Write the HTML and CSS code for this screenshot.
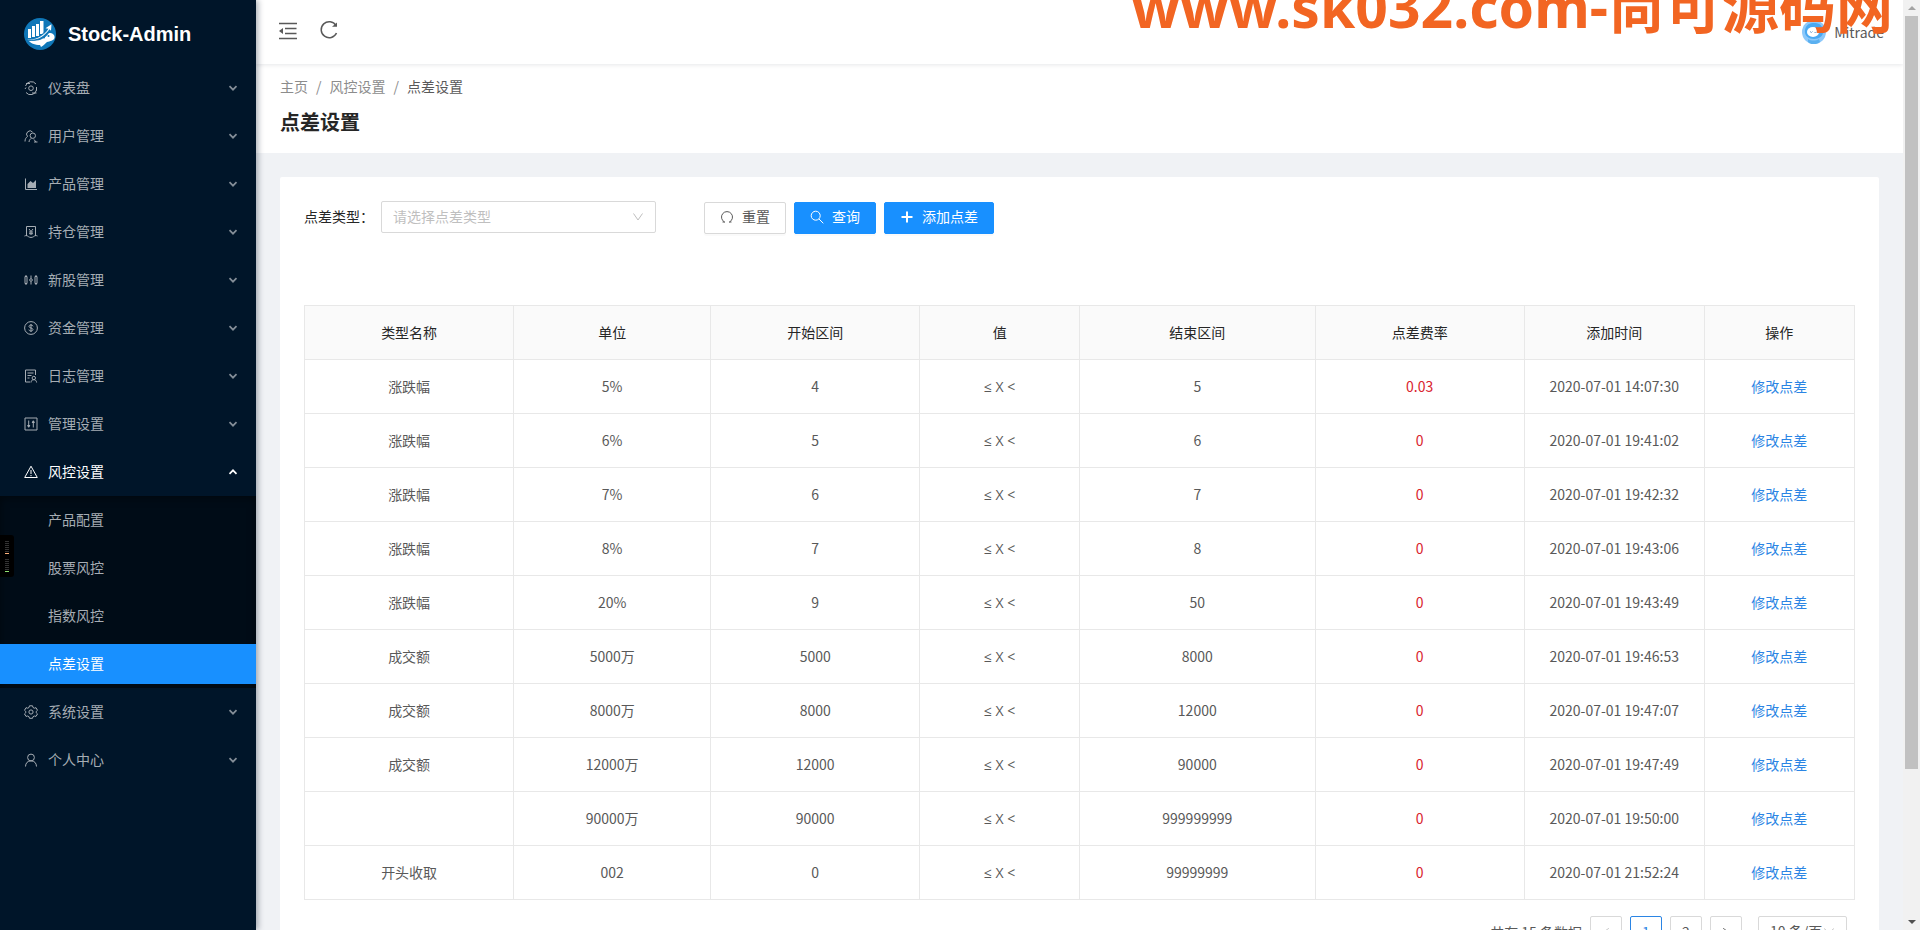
FILE: index.html
```
<!DOCTYPE html>
<html lang="zh-CN">
<head>
<meta charset="utf-8">
<title>点差设置 - Stock-Admin</title>
<link rel="stylesheet" href="styles.css">
</head>
<body>
<svg class="sprite" aria-hidden="true">
  <symbol id="down" viewBox="0 0 10 10"><path d="M1.500 3.200 5 6.700 8.500 3.200" fill="none" stroke="currentColor" stroke-width="1.700"/></symbol>
  <symbol id="chevron" viewBox="0 0 12 12"><path d="M1.500 2.500 6 9 10.500 2.500" fill="none" stroke="currentColor"/></symbol>
</svg>
<div class="app">
  <aside class="sider">
    <div class="logo">
      <svg class="logo-mark" viewBox="0 0 32 32">
        <circle cx="16" cy="16" r="16" fill="#0f77b8"/>
        <path d="M4 11h3v9H4zM8 8h3v11H8zM12 6h3v12h-3zM16 3h3.500v13H16z" fill="#fff"/>
        <path d="M4 22c9 2 16 0 21-7 4 0 6 2 5.500 5-1 3-4.500 3-7.500 4-2 2-3 3-6 5l-1-2c-5 0-10-2-12-5z" fill="#fff"/>
        <path d="M3 20.500c9 1 16-3 21-10.500M4 22.300c9 .7 17-3 21.500-10" fill="none" stroke="#0f77b8"/>
        <path d="M3 21.300c9 1 16.500-3 21.500-10.500l-3-.5 6-4-.5 6.500-1.500-1.500C20 19 12 23.500 3 21.300z" fill="#fff"/>
        <circle cx="20" cy="19.500" r="1" fill="#0f77b8"/><circle cx="24.500" cy="18" r="1" fill="#0f77b8"/>
      </svg>
      <span>Stock-Admin</span>
    </div>
    <nav>
      <ul class="menu">
        <li><a class="item" href="#"><svg class="icon" viewBox="0 0 14 14"><path d="M1.500 5A6 6 0 0 1 12 3M12.500 9A6 6 0 0 1 2 11.500M2 2.500h4M8 12h4.500M12.500 6v3.500M1 8l1-1.500"/><circle cx="7" cy="7.200" r="2.300"/></svg><span>仪表盘</span><svg class="arrow"><use href="#down"/></svg></a></li>
        <li><a class="item" href="#"><svg class="icon" viewBox="0 0 14 14"><path d="M3.500 7.500A3.300 3.300 0 1 1 8.500 3M1 12.500c0-2.500 1-4 2.500-5M5 13c.2-2 1.200-3 2.500-3.800M10 10.500l2 2.500M10 13h3.500"/><circle cx="8.800" cy="6.700" r="2.700"/></svg><span>用户管理</span><svg class="arrow"><use href="#down"/></svg></a></li>
        <li><a class="item" href="#"><svg class="icon" viewBox="0 0 14 14"><path d="M1.500 1.500v11H13"/><path class="solid" d="M3.500 11V7l3-3 2.500 2 3-3v8z"/></svg><span>产品管理</span><svg class="arrow"><use href="#down"/></svg></a></li>
        <li><a class="item" href="#"><svg class="icon" viewBox="0 0 14 14"><path d="M2.500 11V1.500h9V11M.5 11c1.500-.8 3-.3 4 .7 1.500 1 3.500 1 5 0 1-1 2.500-1.500 4-.7M5 4l2 2.500L9 4M7 6.500V10M5 7h4M5 8.700h4"/></svg><span>持仓管理</span><svg class="arrow"><use href="#down"/></svg></a></li>
        <li><a class="item" href="#"><svg class="icon" viewBox="0 0 14 14"><path d="M1 3.500h2v7H1zM2 2v1.500M2 10.500V12M11 3.500h2v7h-2zM12 2v1.500M12 10.500V12M7 2.500v3M7 8.500v3"/><circle cx="7" cy="7" r="1.300"/></svg><span>新股管理</span><svg class="arrow"><use href="#down"/></svg></a></li>
        <li><a class="item" href="#"><svg class="icon" viewBox="0 0 14 14"><circle cx="7" cy="7" r="6.400"/><path d="M9 5.300C8.800 4.400 8 4 7 4c-1.100 0-2 .5-2 1.400 0 2 4 1.200 4 3.200C9 9.500 8.100 10 7 10c-1.200 0-2-.5-2.100-1.400M7 3v8"/></svg><span>资金管理</span><svg class="arrow"><use href="#down"/></svg></a></li>
        <li><a class="item" href="#"><svg class="icon" viewBox="0 0 14 14"><path d="M6 13H1.500V1h10v5M3.500 4h6M3.500 6.500h4M3.500 9h2M7 13.500c.2-2 1.200-2.800 2.800-2.800s2.600.8 2.800 2.800"/><circle cx="9.800" cy="9" r="1.700"/></svg><span>日志管理</span><svg class="arrow"><use href="#down"/></svg></a></li>
        <li><a class="item" href="#"><svg class="icon" viewBox="0 0 14 14"><path d="M1 1h12v12H1zM4.700 3.500v7M9.300 3.500v7M3.300 8.500h2.800M7.900 5.500h2.800M3.700 9.500h2M8.300 4.500h2"/></svg><span>管理设置</span><svg class="arrow"><use href="#down"/></svg></a></li>
        <li><a class="item open" href="#"><svg class="icon" viewBox="0 0 14 14"><path d="M7 1.200 13.300 12.500H.7zM7 5v4M7 10v1.200"/></svg><span>风控设置</span><svg class="arrow"><use href="#down"/></svg></a>
          <ul class="submenu">
            <li><a class="item" href="#"><span>产品配置</span></a></li>
            <li><a class="item" href="#"><span>股票风控</span></a></li>
            <li><a class="item" href="#"><span>指数风控</span></a></li>
            <li><a class="item selected" href="#" aria-current="page"><span>点差设置</span></a></li>
          </ul>
        </li>
        <li><a class="item" href="#"><svg class="icon" viewBox="0 0 14 14"><path d="M5.500.8h3l.5 1.700 1.300.7 1.700-.5 1.500 2.600-1.300 1.200v1.200l1.300 1.200-1.500 2.500-1.700-.4-1.300.7-.5 1.600h-3L5 11.700 3.700 11l-1.700.4L.5 8.900l1.300-1.200V6.500L.5 5.300 2 2.700l1.700.5L5 2.500z"/><circle cx="7" cy="7" r="2.100"/></svg><span>系统设置</span><svg class="arrow"><use href="#down"/></svg></a></li>
        <li><a class="item" href="#"><svg class="icon" viewBox="0 0 14 14"><circle cx="7" cy="4.500" r="3.400"/><path d="M1.500 13.500c.2-3.500 2-5.600 5.500-5.600s5.300 2.100 5.500 5.600"/></svg><span>个人中心</span><svg class="arrow"><use href="#down"/></svg></a></li>
      </ul>
    </nav>
    <div class="meter"><i></i><i></i></div>
  </aside>

  <div class="main">
    <header class="topbar">
      <button class="tool" type="button" aria-label="收起菜单"><svg width="20" height="20" viewBox="0 0 20 20"><path d="M1 2.500h18M7 7.500h11.500M7 12.500h11.500M1 17.500h18" fill="none" stroke="currentColor" stroke-width="1.500"/><path d="M1 10l4-3v6z" fill="currentColor"/></svg></button>
      <button class="tool" type="button" aria-label="刷新"><svg width="20" height="20" viewBox="0 0 20 20"><path d="M17 5.500A8 8 0 1 0 17.500 13" fill="none" stroke="currentColor" stroke-width="1.500"/><path d="M18 2.500v4.300h-5z" fill="currentColor"/></svg></button>
      <div class="user">
        <svg width="24" height="24" viewBox="0 0 24 24"><circle cx="12" cy="12" r="12" fill="#8cc8fa"/><path d="M3 10C4 4 8 3 12 3s8 1 9 7-4 9-9 9-10-3-9-9z" fill="#4aa9f2"/><ellipse cx="11" cy="12" rx="6" ry="5" fill="#fff"/><path d="M8 11.500l1.500 1 1-1M12.500 12l1 1 1.500-1.500" fill="none" stroke="#6ea2cd"/><path d="M6 19c3 2 8 2 11 0l1 3c-4 3-9 3-12 0z" fill="#5ab0f0"/></svg>
        <span>Mitrade</span>
      </div>
    </header>
    <section class="page-head">
      <nav class="crumbs" aria-label="面包屑"><a href="#">主页</a><i>/</i><a href="#">风控设置</a><i>/</i><span>点差设置</span></nav>
      <h1>点差设置</h1>
    </section>
    <main class="content">
      <div class="card">
        <form class="filters">
          <label for="kind">点差类型：</label>
          <div class="pick">
            <select id="kind"><option>请选择点差类型</option></select>
            <svg><use href="#chevron"/></svg>
          </div>
          <div class="actions">
            <button class="btn" type="reset"><svg class="icon" viewBox="0 0 14 14"><path d="M4.500 12A5.500 5.500 0 1 1 9.500 12M2.500 12h2.500M9 12h2.500"/></svg>重置</button>
            <button class="btn primary" type="button"><svg class="icon" viewBox="0 0 14 14"><circle cx="5.700" cy="5.700" r="4.500"/><path d="M9 9l4.300 4.300"/></svg>查询</button>
            <button class="btn primary" type="button"><svg class="icon" viewBox="0 0 14 14"><path class="thick" d="M7 1.500v11M1.500 7h11"/></svg>添加点差</button>
          </div>
        </form>
        <table>
          <colgroup><col class="c1"><col class="c2"><col class="c1"><col class="c3"><col class="c4"><col class="c1"><col class="c5"><col></colgroup>
          <thead><tr><th>类型名称</th><th>单位</th><th>开始区间</th><th>值</th><th>结束区间</th><th>点差费率</th><th>添加时间</th><th>操作</th></tr></thead>
          <tbody>
            <tr><td>涨跌幅</td><td>5%</td><td>4</td><td class="op">≤ X &lt;</td><td>5</td><td class="rate">0.03</td><td>2020-07-01 14:07:30</td><td><a href="#">修改点差</a></td></tr>
            <tr><td>涨跌幅</td><td>6%</td><td>5</td><td class="op">≤ X &lt;</td><td>6</td><td class="rate">0</td><td>2020-07-01 19:41:02</td><td><a href="#">修改点差</a></td></tr>
            <tr><td>涨跌幅</td><td>7%</td><td>6</td><td class="op">≤ X &lt;</td><td>7</td><td class="rate">0</td><td>2020-07-01 19:42:32</td><td><a href="#">修改点差</a></td></tr>
            <tr><td>涨跌幅</td><td>8%</td><td>7</td><td class="op">≤ X &lt;</td><td>8</td><td class="rate">0</td><td>2020-07-01 19:43:06</td><td><a href="#">修改点差</a></td></tr>
            <tr><td>涨跌幅</td><td>20%</td><td>9</td><td class="op">≤ X &lt;</td><td>50</td><td class="rate">0</td><td>2020-07-01 19:43:49</td><td><a href="#">修改点差</a></td></tr>
            <tr><td>成交额</td><td>5000万</td><td>5000</td><td class="op">≤ X &lt;</td><td>8000</td><td class="rate">0</td><td>2020-07-01 19:46:53</td><td><a href="#">修改点差</a></td></tr>
            <tr><td>成交额</td><td>8000万</td><td>8000</td><td class="op">≤ X &lt;</td><td>12000</td><td class="rate">0</td><td>2020-07-01 19:47:07</td><td><a href="#">修改点差</a></td></tr>
            <tr><td>成交额</td><td>12000万</td><td>12000</td><td class="op">≤ X &lt;</td><td>90000</td><td class="rate">0</td><td>2020-07-01 19:47:49</td><td><a href="#">修改点差</a></td></tr>
            <tr><td></td><td>90000万</td><td>90000</td><td class="op">≤ X &lt;</td><td>999999999</td><td class="rate">0</td><td>2020-07-01 19:50:00</td><td><a href="#">修改点差</a></td></tr>
            <tr><td>开头收取</td><td>002</td><td>0</td><td class="op">≤ X &lt;</td><td>99999999</td><td class="rate">0</td><td>2020-07-01 21:52:24</td><td><a href="#">修改点差</a></td></tr>
          </tbody>
        </table>
        <div class="pager">
          <span>共有 15 条数据</span>
          <button class="page off" type="button" aria-label="上一页"><svg class="prev"><use href="#chevron"/></svg></button>
          <button class="page current" type="button">1</button>
          <button class="page" type="button">2</button>
          <button class="page" type="button" aria-label="下一页"><svg class="next"><use href="#chevron"/></svg></button>
          <div class="pick size"><select aria-label="每页条数"><option>10 条/页</option></select><svg><use href="#chevron"/></svg></div>
        </div>
      </div>
    </main>
    <div class="watermark">www.sk032.com-尚可源码网</div>
  </div>
  <div class="scrollbar"><b class="up"></b><span class="thumb"></span><b class="dn"></b></div>
</div>
</body>
</html>
```
FILE: styles.css
```
* { box-sizing: border-box; }
body {
  margin: 0;
  overflow: hidden;
  color: #595959;
  background: #f0f2f5;
  font: 14px/21px "Noto Sans CJK SC", "Open Sans", sans-serif;
}
a { color: inherit; text-decoration: none; }
ul { margin: 0; padding: 0; list-style: none; }
button, select { font: inherit; color: inherit; }
.sprite { display: none; }
.app { display: flex; height: 100vh; }

.sider {
  position: relative;
  z-index: 2;
  flex: none;
  width: 256px;
  background: #001529;
  box-shadow: 2px 0 6px rgba(0, 21, 41, .35);
}
.logo {
  display: flex;
  align-items: center;
  gap: 12px;
  height: 64px;
  padding: 4px 24px 0;
  color: #fff;
  font: bold 20px/32px "Liberation Sans", sans-serif;
}
.logo-mark { width: 32px; height: 32px; }
.menu { display: flow-root; color: #a6adb4; }
.item {
  display: flex;
  align-items: center;
  gap: 10px;
  height: 40px;
  margin: 4px 0 8px;
  padding: 0 18px 0 24px;
}
.item span { padding-bottom: 2px; }
.item.open { color: #fff; margin-bottom: 4px; }
.icon {
  flex: none;
  width: 14px;
  height: 14px;
  fill: none;
  stroke: currentColor;
}
.icon .solid { fill: currentColor; stroke: none; }
.icon .thick { stroke-width: 2; }
.arrow { width: 10px; height: 10px; margin-left: auto; opacity: .8; }
.open .arrow { transform: rotate(180deg); opacity: 1; }
.submenu {
  display: flow-root;
  margin-bottom: 4px;
  background: #000c17;
  box-shadow: inset 0 2px 8px rgba(0, 0, 0, .45);
}
.submenu .item { padding-left: 48px; }
.submenu li:last-child .item { margin-bottom: 4px; }
.item.selected { color: #fff; background: #1890ff; }
.meter {
  position: absolute;
  top: 535px;
  left: 0;
  display: grid;
  gap: 5px;
  width: 14px;
  padding: 6px 5px 5px;
  border-radius: 0 3px 3px 0;
  background: #000;
}
.meter i {
  height: 13px;
  width: 4px;
  border-bottom: 1px solid #ffb27a;
  background: repeating-linear-gradient(#333 0 1px, #000 1px 2px);
}
.meter i + i { border-color: #8fe070; }

.main {
  position: relative;
  display: flex;
  flex: 1;
  flex-direction: column;
  min-width: 0;
  overflow: hidden;
}
.topbar {
  position: relative;
  display: flex;
  flex: none;
  align-items: center;
  gap: 21px;
  height: 64px;
  padding: 0 19px 0 22px;
  background: #fff;
  box-shadow: 0 1px 4px rgba(0, 21, 41, .1);
}
.tool { height: 22px; padding: 0; border: 0; background: none; }
.tool + .tool { height: 24px; }
.user {
  display: flex;
  align-items: center;
  gap: 8px;
  margin-left: auto;
}
.page-head { flex: none; padding: 12px 24px 15px; background: #fff; }
.crumbs { display: flex; gap: 8px; color: #8c8c8c; }
.crumbs i { font-style: normal; }
.crumbs span { color: #595959; }
h1 { margin: 9px 0 0; color: #262626; font-size: 20px; line-height: 32px; }
.content { flex: none; padding: 24px; }
.card { padding: 24px; border-radius: 2px; background: #fff; }
.filters { display: flex; align-items: center; height: 104px; padding-bottom: 72px; }
.filters label { width: 77px; padding-bottom: 2px; color: #262626; white-space: nowrap; }
.pick { position: relative; width: 275px; }
.pick select {
  display: block;
  width: 100%;
  height: 32px;
  padding: 0 11px 2px;
  border: 1px solid #d9d9d9;
  border-radius: 2px;
  color: #bfbfbf;
  background: #fff;
  appearance: none;
}
.pick svg {
  position: absolute;
  top: 10px;
  right: 12px;
  width: 12px;
  height: 12px;
  color: #bfbfbf;
  pointer-events: none;
}
.actions { display: flex; gap: 8px; margin-left: 48px; padding-top: 1px; }
.btn {
  display: flex;
  align-items: center;
  gap: 8px;
  height: 32px;
  padding: 0 15px 2px;
  border: 1px solid #d9d9d9;
  border-radius: 2px;
  background: #fff;
  box-shadow: 0 2px 0 rgba(0, 0, 0, .02);
}
.primary { border-color: #1890ff; color: #fff; background: #1890ff; }

table {
  width: 100%;
  border-collapse: collapse;
  table-layout: fixed;
  text-align: center;
}
.c1 { width: 13.5%; }
.c2 { width: 12.7%; }
.c3 { width: 10.3%; }
.c4 { width: 15.2%; }
.c5 { width: 11.6%; }
th, td { height: 54px; padding: 0; border: 1px solid #e8e8e8; }
th { color: #262626; background: #fafafa; font-weight: normal; }
.op { font-family: "Open Sans", sans-serif; }
.rate { color: #d9232e; }
td a { color: #2b85e4; }
.pager {
  display: flex;
  align-items: center;
  justify-content: flex-end;
  gap: 8px;
  padding: 16px 8px 0;
}
.page {
  display: grid;
  place-items: center;
  width: 32px;
  height: 32px;
  padding: 0;
  border: 1px solid #d9d9d9;
  border-radius: 2px;
  background: #fff;
}
.page svg { width: 10px; height: 10px; }
.prev { transform: rotate(90deg); }
.next { transform: rotate(-90deg); }
.off { color: #bfbfbf; }
.current { border-color: #2b85e4; color: #2b85e4; }
.pick.size { width: 89px; margin-left: 8px; }
.size select { color: #595959; }

.watermark {
  position: absolute;
  top: -34px;
  right: 10px;
  color: #f26522;
  font: bold 57px/80px "Noto Sans", "Noto Sans CJK SC", sans-serif;
  white-space: nowrap;
  pointer-events: none;
}
.scrollbar {
  display: flex;
  flex: none;
  flex-direction: column;
  align-items: center;
  gap: 6px;
  width: 17px;
  padding: 6px 2px;
  background: #f1f1f1;
}
.thumb { width: 13px; height: 81vh; background: #c1c1c1; }
.up, .dn { border: 4px solid transparent; }
.up { border-top: 0; border-bottom-color: #a3a3a3; }
.dn { margin-top: auto; border-bottom: 0; border-top-color: #505050; }
```
